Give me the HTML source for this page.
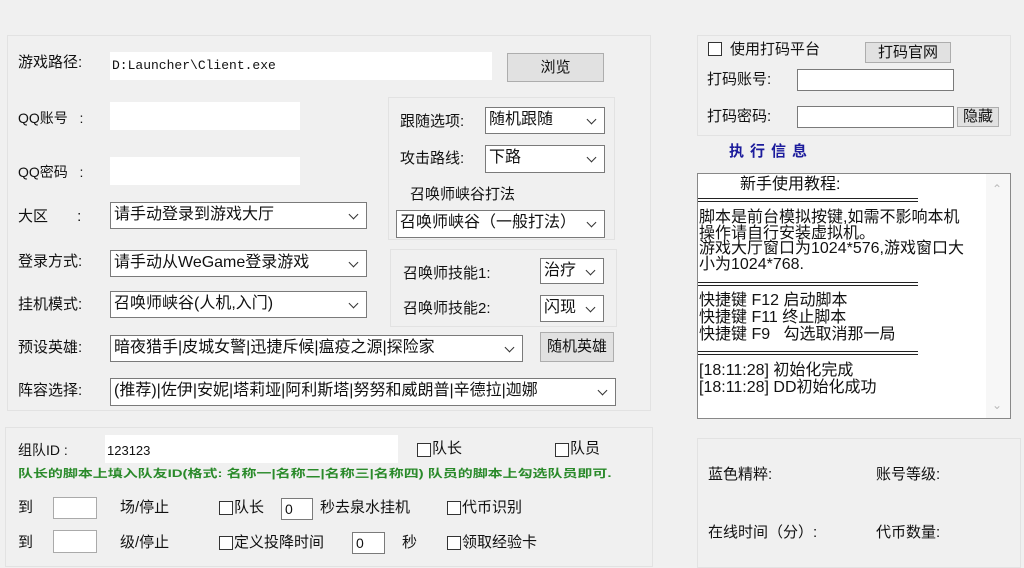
<!DOCTYPE html>
<html><head><meta charset="utf-8">
<style>
*{box-sizing:border-box;margin:0;padding:0}
body{width:1024px;height:560px;background:#f0f0f0;position:relative;overflow:hidden;font-family:"Liberation Sans","Noto Sans CJK SC",sans-serif;font-size:15px;color:#111}
.a{position:absolute;white-space:nowrap}
.l{position:absolute;white-space:nowrap;line-height:18px}
.panel{position:absolute;border:1px solid #e2e2e2;background:#f0f0f0}
.in{position:absolute;background:#fff}
.inb{position:absolute;background:#fff;border:1px solid #7a7a7a}
.sel{position:absolute;background:#fff;border:1px solid #7a7a7a;padding-left:3px;line-height:24px;font-size:16px;white-space:nowrap;overflow:hidden}
.sel::after{content:"";position:absolute;right:9px;top:8px;width:6px;height:6px;border-right:1.3px solid #333;border-bottom:1.3px solid #333;transform:rotate(45deg)}
.btn{position:absolute;background:#e1e1e1;border:1px solid #adadad;text-align:center;font-size:15px}
.cb{position:absolute;width:14px;height:14px;border:1px solid #333;background:#fff}
.sep{position:absolute;left:698px;width:220px;height:4px;border-top:1px solid #222;border-bottom:1px solid #222}
.log{position:absolute;font-size:16px;white-space:nowrap}
</style></head><body>
<div class="panel" style="left:7px;top:35px;width:644px;height:376px"></div>
<div class="l" style="left:18px;top:54px">游戏路径:</div>
<div class="in" style="left:110px;top:52px;width:382px;height:28px"></div>
<div class="a" style="left:112px;top:58px;font-family:'Liberation Mono',monospace;font-size:13px">D:Launcher\Client.exe</div>
<div class="btn" style="left:507px;top:53px;width:97px;height:29px;line-height:27px">浏览</div>

<div class="l" style="left:18px;top:109px;font-size:14px">QQ账号&nbsp;&nbsp;&nbsp;:</div>
<div class="in" style="left:110px;top:102px;width:190px;height:28px"></div>
<div class="l" style="left:18px;top:163px;font-size:14px">QQ密码&nbsp;&nbsp;&nbsp;:</div>
<div class="in" style="left:110px;top:157px;width:190px;height:28px"></div>
<div class="l" style="left:18px;top:208px">大区&nbsp;&nbsp;&nbsp;&nbsp;&nbsp;&nbsp;&nbsp;:</div>
<div class="sel" style="left:110px;top:202px;width:257px;height:27px">请手动登录到游戏大厅</div>
<div class="l" style="left:18px;top:253px">登录方式:</div>
<div class="sel" style="left:110px;top:250px;width:257px;height:27px">请手动从WeGame登录游戏</div>
<div class="l" style="left:18px;top:296px">挂机模式:</div>
<div class="sel" style="left:110px;top:291px;width:257px;height:27px">召唤师峡谷(人机,入门)</div>
<div class="l" style="left:18px;top:339px">预设英雄:</div>
<div class="sel" style="left:110px;top:335px;width:413px;height:27px">暗夜猎手|皮城女警|迅捷斥候|瘟疫之源|探险家</div>
<div class="btn" style="left:540px;top:332px;width:74px;height:30px;line-height:28px">随机英雄</div>
<div class="l" style="left:18px;top:382px">阵容选择:</div>
<div class="sel" style="left:110px;top:378px;width:506px;height:28px">(推荐)|佐伊|安妮|塔莉垭|阿利斯塔|努努和威朗普|辛德拉|迦娜</div>

<div class="panel" style="left:388px;top:97px;width:227px;height:143px"></div>
<div class="l" style="left:400px;top:113px">跟随选项:</div>
<div class="sel" style="left:485px;top:107px;width:120px;height:27px">随机跟随</div>
<div class="l" style="left:400px;top:150px">攻击路线:</div>
<div class="sel" style="left:485px;top:145px;width:120px;height:28px">下路</div>
<div class="l" style="left:410px;top:186px">召唤师峡谷打法</div>
<div class="sel" style="left:396px;top:210px;width:209px;height:28px">召唤师峡谷（一般打法）</div>

<div class="panel" style="left:390px;top:249px;width:227px;height:78px"></div>
<div class="l" style="left:403px;top:265px">召唤师技能1:</div>
<div class="sel" style="left:540px;top:258px;width:64px;height:26px">治疗</div>
<div class="l" style="left:403px;top:300px">召唤师技能2:</div>
<div class="sel" style="left:540px;top:295px;width:64px;height:27px">闪现</div>

<div class="panel" style="left:697px;top:35px;width:314px;height:101px"></div>
<div class="cb" style="left:708px;top:42px"></div>
<div class="l" style="left:730px;top:41px">使用打码平台</div>
<div class="btn" style="left:865px;top:42px;width:86px;height:21px;line-height:19px">打码官网</div>
<div class="l" style="left:707px;top:71px">打码账号:</div>
<div class="inb" style="left:797px;top:69px;width:157px;height:22px"></div>
<div class="l" style="left:707px;top:108px">打码密码:</div>
<div class="inb" style="left:797px;top:106px;width:157px;height:22px"></div>
<div class="btn" style="left:957px;top:107px;width:42px;height:20px;line-height:18px">隐藏</div>
<div class="l" style="left:729px;top:143px;color:#1c1c9c;font-weight:bold;letter-spacing:6px">执行信息</div>

<div class="a" style="left:697px;top:173px;width:314px;height:246px;background:#fff;border:1px solid #888"></div>
<div class="a" style="left:986px;top:174px;width:24px;height:244px;background:#f7f7f7"></div>
<div class="a" style="left:992px;top:182px;color:#bbb;font-size:12px">&#8963;</div>
<div class="a" style="left:992px;top:398px;color:#bbb;font-size:12px">&#8964;</div>
<div class="log" style="left:740px;top:176px;line-height:18px">新手使用教程:</div>
<div class="sep" style="top:198px"></div>
<div class="log" style="left:699px;top:210px;line-height:15.5px">脚本是前台模拟按键,如需不影响本机<br>操作请自行安装虚拟机。<br>游戏大厅窗口为1024*576,游戏窗口大<br>小为1024*768.</div>
<div class="sep" style="top:282px"></div>
<div class="log" style="left:699px;top:292px;line-height:17px">快捷键 F12 启动脚本<br>快捷键 F11 终止脚本<br>快捷键 F9&nbsp;&nbsp;&nbsp;勾选取消那一局</div>
<div class="sep" style="top:351px"></div>
<div class="log" style="left:699px;top:362px;line-height:17px">[18:11:28] 初始化完成<br>[18:11:28] DD初始化成功</div>

<div class="panel" style="left:5px;top:427px;width:648px;height:140px"></div>
<div class="l" style="left:18px;top:441px;font-size:14px">组队ID :</div>
<div class="in" style="left:105px;top:435px;width:293px;height:28px"></div>
<div class="a" style="left:107px;top:443px;font-size:13px">123123</div>
<div class="cb" style="left:417px;top:443px"></div><div class="l" style="left:432px;top:440px">队长</div>
<div class="cb" style="left:555px;top:443px"></div><div class="l" style="left:570px;top:440px">队员</div>
<div class="a" style="left:18px;top:465px;color:#2a8a2a;font-size:11px;font-weight:bold;transform:scaleX(1.36);transform-origin:0 0">队长的脚本上填入队友ID(格式: 名称一|名称二|名称三|名称四) 队员的脚本上勾选队员即可.</div>
<div class="l" style="left:18px;top:499px">到</div>
<div class="inb" style="left:53px;top:497px;width:44px;height:22px;border-color:#aaa"></div>
<div class="l" style="left:120px;top:499px">场/停止</div>
<div class="cb" style="left:219px;top:501px"></div><div class="l" style="left:234px;top:499px">队长</div>
<div class="inb" style="left:281px;top:498px;width:32px;height:22px"></div><div class="a" style="left:285px;top:501px;font-size:14px">0</div>
<div class="l" style="left:320px;top:499px">秒去泉水挂机</div>
<div class="cb" style="left:447px;top:501px"></div><div class="l" style="left:462px;top:499px">代币识别</div>
<div class="l" style="left:18px;top:534px">到</div>
<div class="inb" style="left:53px;top:530px;width:44px;height:23px;border-color:#aaa"></div>
<div class="l" style="left:120px;top:534px">级/停止</div>
<div class="cb" style="left:219px;top:536px"></div><div class="l" style="left:234px;top:534px">定义投降时间</div>
<div class="inb" style="left:352px;top:532px;width:33px;height:22px"></div><div class="a" style="left:356px;top:535px;font-size:14px">0</div>
<div class="l" style="left:402px;top:534px">秒</div>
<div class="cb" style="left:447px;top:536px"></div><div class="l" style="left:462px;top:534px">领取经验卡</div>

<div class="panel" style="left:697px;top:438px;width:324px;height:130px"></div>
<div class="l" style="left:708px;top:466px">蓝色精粹:</div>
<div class="l" style="left:876px;top:466px">账号等级:</div>
<div class="l" style="left:708px;top:524px">在线时间（分）:</div>
<div class="l" style="left:876px;top:524px">代币数量:</div>
</body></html>
